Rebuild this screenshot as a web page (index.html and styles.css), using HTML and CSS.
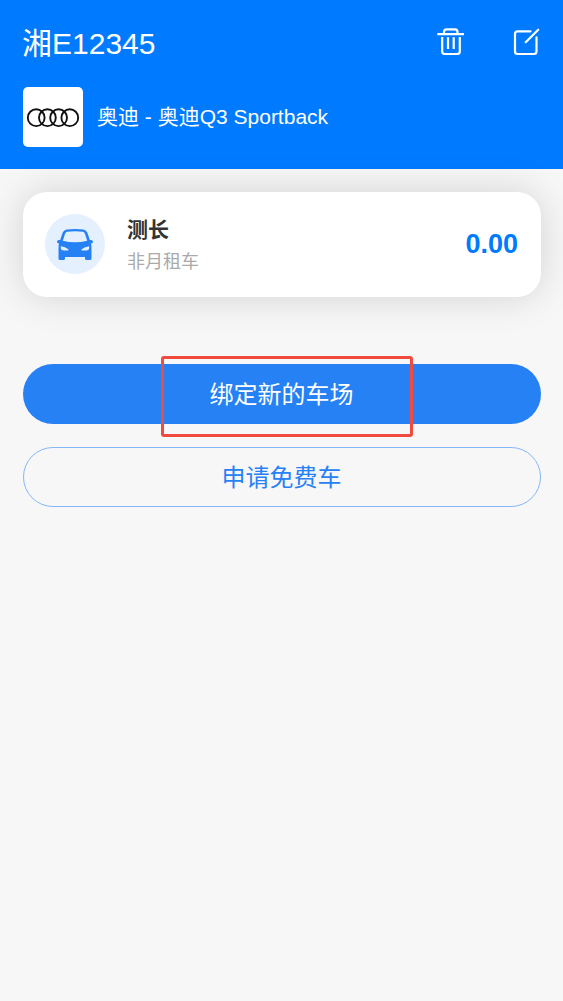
FILE: index.html
```html
<!DOCTYPE html>
<html lang="zh-CN">
<head>
<meta charset="utf-8">
<meta name="viewport" content="width=device-width, initial-scale=1">
<title>湘E12345</title>
<link rel="stylesheet" href="styles.css">
</head>
<body>
<header class="header">
  <div class="title-row">
    <h1 class="plate">湘E12345</h1>
    <div class="actions">
      <button class="icon-button" type="button" aria-label="删除">
        <svg class="icon" viewBox="0 0 30 30" fill="none" stroke="currentColor" stroke-width="2.2" stroke-linejoin="round">
          <path d="M2.3 8.200H29M9 8V6Q9 3.300 11.500 3.300H20Q22.500 3.300 22.500 6V8M7.200 11V25.500Q7.200 28 9.700 28H22.300Q24.800 28 24.800 25.500V11M13 11.300V23M18.700 11.300V23"/>
        </svg>
      </button>
      <button class="icon-button" type="button" aria-label="编辑">
        <svg class="icon" viewBox="0 0 30 30" fill="none" stroke="currentColor" stroke-width="2.2" stroke-linecap="round">
          <path d="M19.500 5.300H6.500Q4 5.300 4 7.800V25.500Q4 28 6.500 28H23Q25.500 28 25.500 25.500V11.300M14.700 16.200L27.200 3.700"/>
        </svg>
      </button>
    </div>
  </div>
  <div class="model-row">
    <svg class="brand" viewBox="0 0 60 60" role="img" aria-label="奥迪" fill="none" stroke="#111" stroke-width="1.9">
      <circle cx="13.200" cy="30.700" r="8.400"/><circle cx="24.400" cy="30.700" r="8.400"/><circle cx="35.600" cy="30.700" r="8.400"/><circle cx="46.800" cy="30.700" r="8.400"/>
    </svg>
    <span class="model">奥迪 - 奥迪Q3 Sportback</span>
  </div>
</header>
<main class="content">
  <section class="card">
    <div class="car-badge">
      <svg class="car" viewBox="0 0 36 32" fill="#2681f4">
        <path fill-rule="evenodd" d="M9.500 1.500Q18 0.300 26.500 1.500Q29.500 2 30.500 5L32.800 12H34.500Q36 12.500 36 14Q36 15.300 34 15.500Q34.500 17 34.500 20V30.500Q34.500 32 33 32H29.500Q28 32 28 30.500V29H8V30.500Q8 32 6.500 32H3Q1.500 32 1.500 30.500V20Q1.500 17 2 15.500Q0 15.300 0 14Q0 12.500 1.500 12H3.200L5.500 5Q6.500 2 9.500 1.500ZM10 3.800Q8.500 4 8 6L5.800 12.800Q18 15.800 30.200 12.800L28 6Q27.500 4 26 3.800Q18 2.800 10 3.800ZM3.800 18.200V20Q4 22.500 7 22.500H11Q12 22.300 11 21Q8.500 18.800 3.800 18.200ZM32.200 18.200Q27.500 18.800 25 21Q24 22.300 25 22.500H29Q32 22.500 32.200 20Z"/>
      </svg>
    </div>
    <div class="lot">
      <h2 class="lot-name">测长</h2>
      <p class="lot-type">非月租车</p>
    </div>
    <strong class="amount">0.00</strong>
  </section>
  <div class="buttons">
    <div class="marked">
      <button class="button primary" type="button">绑定新的车场</button>
      <span class="marker"></span>
    </div>
    <button class="button outline" type="button">申请免费车</button>
  </div>
</main>
</body>
</html>
```
FILE: styles.css
```css
* { box-sizing: border-box; }

body {
  margin: 0;
  background: #f7f7f7;
  color: #333;
  font-family: "Liberation Sans", "Noto Sans CJK SC", sans-serif;
}

h1, h2, p { margin: 0; }

button {
  font-family: inherit;
  cursor: pointer;
}

.header {
  padding: 22px;
  background: #007aff;
  color: #fff;
}

.title-row,
.model-row {
  display: flex;
}

.title-row {
  align-items: flex-start;
  justify-content: space-between;
}

.plate {
  font-size: 30px;
  font-weight: 400;
  line-height: 43px;
}

.actions {
  display: flex;
  gap: 46px;
  padding-top: 4px;
}

.icon-button {
  padding: 0;
  border: 0;
  background: none;
  color: inherit;
}

.icon {
  display: block;
  width: 30px;
  height: 30px;
}

.model-row {
  align-items: center;
  gap: 14px;
  margin-top: 22px;
  padding-left: 1px;
}

.brand {
  width: 60px;
  height: 60px;
  border-radius: 5px;
  background: #fff;
}

.model {
  font-size: 21px;
  line-height: 30px;
}

.content { padding: 23px 22px 23px 23px; }

.card {
  display: flex;
  align-items: flex-start;
  padding: 22px 23px 23px 22px;
  border-radius: 24px;
  background: #fff;
  box-shadow: 0 0 38px rgba(0, 0, 0, 0.15);
}

.car-badge {
  display: grid;
  place-items: center;
  width: 60px;
  height: 60px;
  border-radius: 50%;
  background: #e5f0ff;
}

.car {
  width: 36px;
  height: 32px;
}

.lot {
  flex: 1;
  margin-left: 22px;
}

.lot-name {
  font-size: 21px;
  line-height: 32px;
}

.lot-type {
  color: #aaa;
  font-size: 18px;
  line-height: 32px;
  margin-bottom: -4px;
}

.amount {
  color: #007aff;
  font-size: 27px;
  line-height: 60px;
}

.buttons {
  display: grid;
  gap: 23px;
  margin-top: 67px;
}

.marked { position: relative; }

.button {
  display: block;
  width: 100%;
  height: 60px;
  padding: 0 1px 4px 0;
  border: 0;
  border-radius: 30px;
  font-size: 24px;
}

.primary {
  background: #2681f4;
  color: #fff;
}

.outline {
  border: 1px solid #85b6f7;
  background: transparent;
  color: #2681f4;
}

.marker {
  position: absolute;
  top: -8px;
  left: 138px;
  width: 252px;
  height: 81px;
  border: 3px solid #f14b40;
  border-radius: 3px;
  pointer-events: none;
}
```
